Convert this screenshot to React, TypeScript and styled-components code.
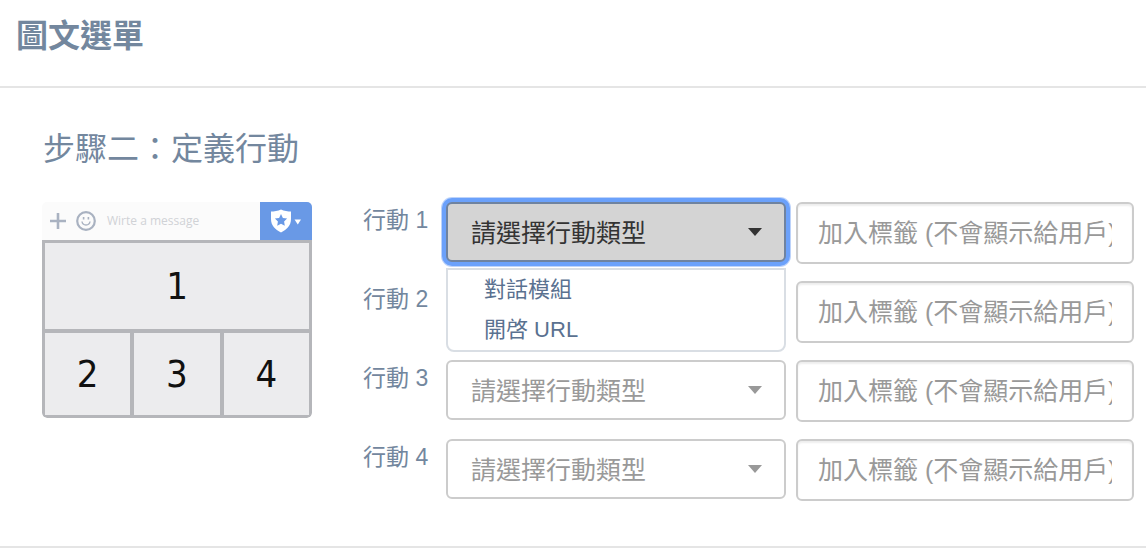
import React, { useState } from 'react';
import styled, { createGlobalStyle, css } from 'styled-components';

const GlobalStyle = createGlobalStyle`
  *, *::before, *::after { box-sizing: border-box; }
  body {
    margin: 0;
    background: #ffffff;
    color: #73879e;
    font-family: "Liberation Sans", "Noto Sans CJK TC", sans-serif;
  }
`;

const PageHeader = styled.header`
  padding: 12px 16px 26px;
  border-bottom: 2px solid #e5e5e5;
`;

const PageTitle = styled.h1`
  margin: 0;
  font-size: 32px;
  line-height: 48px;
  font-weight: 700;
`;

const Step = styled.main`
  padding: 37px 12px 45px 42px;
  border-bottom: 2px solid #e5e5e5;
`;

const StepTitle = styled.h2`
  margin: 0 0 29px;
  padding-left: 1px;
  font-size: 32px;
  line-height: 48px;
  font-weight: 400;
`;

const Columns = styled.div`
  display: flex;
  align-items: flex-start;
  gap: 51px;
`;

const Preview = styled.section`
  flex: 0 0 270px;
  overflow: hidden;
  border-radius: 5px;
`;

const PreviewBar = styled.div`
  display: flex;
  align-items: center;
  gap: 8px;
  height: 38px;
  padding-left: 7px;
  background: #fbfbfb;
`;

const PreviewHint = styled.span`
  flex: 1;
  padding-left: 2px;
  color: #d0d2d6;
  font-family: "Open Sans", sans-serif;
  font-size: 12px;
  line-height: 16px;
`;

const PreviewMenu = styled.span`
  display: flex;
  align-items: center;
  justify-content: center;
  align-self: stretch;
  width: 52px;
  background: #6999e6;
`;

const Areas = styled.div`
  display: grid;
  grid-template-columns: repeat(3, 1fr);
  grid-template-rows: 86px 82px;
  gap: 4px;
  padding: 3px;
  background: #b5b6ba;
  border-radius: 0 0 5px 5px;
`;

const Area = styled.div<{ $wide?: boolean }>`
  display: flex;
  align-items: center;
  justify-content: center;
  grid-column: ${({ $wide }) => ($wide ? '1 / -1' : 'auto')};
  background: #ececee;
  color: #111111;
  font-family: "DejaVu Sans Condensed", "DejaVu Sans", sans-serif;
  font-size: 38px;
  line-height: 48px;
`;

const ActionList = styled.form`
  flex: 1;
  min-width: 0;
  display: grid;
  gap: 17px;
`;

const ActionRow = styled.div`
  display: grid;
  grid-template-columns: 73px minmax(0, 340fr) minmax(0, 338fr);
  align-items: start;
  column-gap: 10px;
`;

const ActionLabel = styled.label`
  padding-top: 2px;
  font-size: 23px;
  line-height: 32px;
`;

const Picker = styled.div`
  position: relative;
`;

const TypeSelect = styled.select<{ $open: boolean }>`
  display: block;
  width: 100%;
  height: 60px;
  padding: 2px 48px 0 23px;
  appearance: none;
  border: 2px solid #cccccc;
  border-radius: 6px;
  background: #ffffff;
  color: #999999;
  font-family: inherit;
  font-size: 25px;
  outline: none;
  ${({ $open }) =>
    $open &&
    css`
      border-color: #6f83a0;
      background: #d4d4d4;
      color: #333333;
      box-shadow: 0 0 0 4px #6ba1fb, 0 0 0 5px #bdd3fa;
    `}
`;

const Caret = styled.svg<{ $open: boolean }>`
  position: absolute;
  top: 26px;
  right: 24px;
  pointer-events: none;
  fill: ${({ $open }) => ($open ? '#333333' : '#999999')};
`;

const Menu = styled.ul`
  position: absolute;
  z-index: 1;
  top: 100%;
  left: 0;
  right: 0;
  margin: 6px 0 0;
  padding: 0;
  list-style: none;
  border: 2px solid #d9dee4;
  border-radius: 0 0 8px 8px;
  background: #ffffff;
`;

const MenuItem = styled.button`
  display: block;
  width: 100%;
  padding: 4px 36px;
  border: 0;
  background: none;
  color: #5a7190;
  font-family: inherit;
  font-size: 22px;
  line-height: 32px;
  text-align: left;
`;

const TagInput = styled.input`
  width: 100%;
  height: 62px;
  padding: 0 20px;
  border: 2px solid #cccccc;
  border-radius: 6px;
  background: #ffffff;
  box-shadow: inset 0 2px 2px rgba(0, 0, 0, 0.07);
  color: #555555;
  font-family: inherit;
  font-size: 25px;
  outline: none;
  &::placeholder { color: #999999; opacity: 1; }
`;

const TYPES = ['對話模組', '開啓 URL'];
const ACTIONS = [1, 2, 3, 4];

const PlusIcon = () => (
  <svg width="18" height="18" viewBox="0 0 18 18" stroke="#a9b2c1" strokeWidth="2.6" aria-hidden="true">
    <path d="M9 1v16M1 9h16" />
  </svg>
);

const SmileIcon = () => (
  <svg width="22" height="22" viewBox="0 0 22 22" fill="none" stroke="#a9b2c1" aria-hidden="true">
    <circle cx="11" cy="11" r="8.8" strokeWidth="2.2" />
    <path d="M7 11.500c.5 4.600 7.500 4.600 8 0" strokeWidth="1.4" />
    <path d="M8.600 7v2.500M13.400 7v2.500" strokeWidth="1.600" />
  </svg>
);

const ShieldIcon = () => (
  <svg width="32" height="24" viewBox="0 0 32 24" aria-hidden="true">
    <path fill="#ffffff" d="M11 0.5C14 2 18 2.6 21 2.6V10c0 6.500-4 10.500-10 13.500C5 20.500 1 16.500 1 10V2.600C4 2.600 8 2 11 .5z" />
    <path fill="#6999e6" d="m11 5 1.900 3.900 4.200.6-3 3 .7 4.200-3.800-2-3.800 2 .7-4.200-3-3 4.200-.6z" />
    <path fill="#ffffff" d="M24.500 10.500h6.500l-3.200 5z" />
  </svg>
);

export default function App() {
  const [openRow, setOpenRow] = useState<number | null>(1);
  const [types, setTypes] = useState<Record<number, string>>({});

  const choose = (row: number, type: string) => {
    setTypes({ ...types, [row]: type });
    setOpenRow(null);
  };

  return (
    <>
      <GlobalStyle />
      <PageHeader lang="zh-TW">
        <PageTitle>圖文選單</PageTitle>
      </PageHeader>
      <Step lang="zh-TW">
        <StepTitle>步驟二：定義行動</StepTitle>
        <Columns>
          <Preview>
            <PreviewBar>
              <PlusIcon />
              <SmileIcon />
              <PreviewHint>Wirte a message</PreviewHint>
              <PreviewMenu>
                <ShieldIcon />
              </PreviewMenu>
            </PreviewBar>
            <Areas>
              {ACTIONS.map((n) => (
                <Area key={n} $wide={n === 1}>{n}</Area>
              ))}
            </Areas>
          </Preview>
          <ActionList>
            {ACTIONS.map((n) => {
              const open = openRow === n;
              return (
                <ActionRow key={n}>
                  <ActionLabel htmlFor={`type-${n}`}>行動 {n}</ActionLabel>
                  <Picker>
                    <TypeSelect
                      id={`type-${n}`}
                      $open={open}
                      value={types[n] ?? ''}
                      onMouseDown={(e) => {
                        e.preventDefault();
                        setOpenRow(open ? null : n);
                      }}
                      onChange={(e) => choose(n, e.target.value)}
                    >
                      <option value="">請選擇行動類型</option>
                      {TYPES.map((t) => (
                        <option key={t} value={t}>{t}</option>
                      ))}
                    </TypeSelect>
                    <Caret $open={open} width="14" height="8" viewBox="0 0 14 8" aria-hidden="true">
                      <path d="M0 0h14L7 8z" />
                    </Caret>
                    {open && (
                      <Menu>
                        {TYPES.map((t) => (
                          <li key={t}>
                            <MenuItem type="button" onClick={() => choose(n, t)}>{t}</MenuItem>
                          </li>
                        ))}
                      </Menu>
                    )}
                  </Picker>
                  <TagInput aria-label={`行動 ${n} 標籤`} placeholder="加入標籤 (不會顯示給用戶)" />
                </ActionRow>
              );
            })}
          </ActionList>
        </Columns>
      </Step>
    </>
  );
}
